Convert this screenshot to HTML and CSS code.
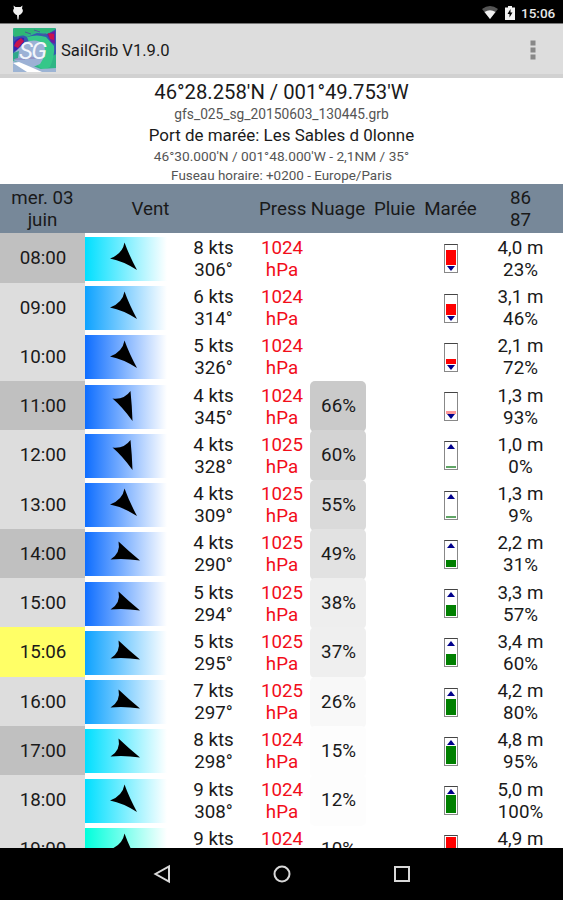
FILE: index.html
```
<!DOCTYPE html>
<html lang="fr">
<head>
    <meta charset="UTF-8">
    <meta name="viewport" content="width=device-width, initial-scale=1.0">
    <title>SailGrib V1.9.0</title>
    <link rel="stylesheet" href="styles.css">
</head>
<body>
    <!-- Shared shapes -->
    <svg class="sprites" width="0" height="0">
        <symbol id="wind-se" viewBox="0 0 80 44"><path d="M39.500 5.500Q37.500 17 25 21.500Q38 24 52 33Q44 18 39.500 5.500Z"/></symbol>
        <symbol id="wind-sse" viewBox="0 0 80 44"><path d="M45.500 6Q39 15 27.500 13.500Q37.500 22 47.500 36Q47 21 45.500 6Z"/></symbol>
        <symbol id="wind-ese" viewBox="0 0 80 44"><path d="M33.500 9.500Q36 21 25.500 27.500Q39 26 55 28.500Q44 19.500 33.500 9.500Z"/></symbol>
    </svg>

    <div class="screen">
        <div class="status-bar">
            <svg class="debug-icon" width="12" height="16" viewBox="0 0 12 16">
                <path d="M1.500 0.500L3.500 2H8.500L10.500 0.500L10 3.500Q12 6 9.500 8.500Q8 10 7 10L6.500 14.500H5.500L5 10Q4 10 2.500 8.500Q0 6 2 3.500Z"/>
            </svg>
            <svg class="wifi-icon" width="16" height="13" viewBox="0 0 16 13">
                <path class="wifi-back" d="M0 3Q8 -3 16 3L8 13Z"/>
                <path d="M2.500 6Q8 2.500 13.500 6L8 13Z"/>
            </svg>
            <svg class="battery-icon" width="10" height="14" viewBox="0 0 10 14">
                <path class="battery" d="M0 1.500H3V0H7V1.500H10V14H0Z"/>
                <path class="bolt" d="M5.500 3L2.500 8H4.500V11.500L7.500 6.500H5.500Z"/>
            </svg>
            <span class="clock">15:06</span>
        </div>

        <div class="action-bar">
            <svg class="logo" width="43" height="44" viewBox="0 0 43 44">
                <rect width="43" height="44" rx="1" fill="#2fb585"/>
                <path d="M0 8Q8 5 14 9L24 5L35 6L43 1V26L38 29Q34 12 20 12L0 28Z" fill="#3558b0"/>
                <path d="M2 1H40L34 4L24 3L12 7L1 9Z" fill="#2eb874"/>
                <path d="M12 4L18 6M21 2L27 4M28 7L33 6" stroke="#4a5a9a"/>
                <path d="M14 9Q24 6 33 9L41 18Q42 28 37 39L30 42L25 38Z" fill="#35c789"/>
                <path d="M1 14Q6 8 11 10Q12 16 7 21L1 23Z" fill="#3a1fb0"/>
                <path d="M34 6L42 3V16L38 14Z" fill="#6a1aa0"/>
                <path d="M3 14L8 10L11 13L5 20L1 18ZM35 5L41 6V12L37 11Z" fill="#c8134d"/>
                <path d="M12 14Q24 10 31 16Q34 27 27 36L18 40L0 32V26Z" fill="#9cb1d5"/>
                <path d="M0 25L6 23L5 30L0 32Z" fill="#2fa88a"/>
                <path d="M0 44V33Q10 34 28 41L43 40V44Z" fill="#9db4d4"/>
                <path d="M0 35L6 34Q18 39 29 44H14Z" fill="#fff"/>
                <path d="M2 31H12M15 30H26" fill="none" stroke="#8a7ab4"/>
                <text class="logo-text" x="6" y="31">SG</text>
            </svg>
            <span class="app-title">SailGrib V1.9.0</span>
            <svg class="overflow" width="6" height="20" viewBox="0 0 6 20">
                <rect x="0.500" y="0.500" width="5" height="5"/>
                <rect x="0.500" y="7.500" width="5" height="5"/>
                <rect x="0.500" y="14.500" width="5" height="5"/>
            </svg>
        </div>

        <div class="info">
            <div class="position">46°28.258'N / 001°49.753'W</div>
            <div class="grib-file">gfs_025_sg_20150603_130445.grb</div>
            <div class="port">Port de marée: Les Sables d 0lonne</div>
            <div class="port-position">46°30.000'N / 001°48.000'W - 2,1NM / 35°</div>
            <div class="timezone">Fuseau horaire: +0200 - Europe/Paris</div>
        </div>

        <div class="row header">
            <div>mer. 03<br>juin</div>
            <div class="wind-title">Vent</div>
            <div class="press-title">Press</div>
            <div>Nuage</div>
            <div>Pluie</div>
            <div>Marée</div>
            <div>86<br>87</div>
        </div>

        <div class="forecast">
            <div class="row">
                <div class="time dark">08:00</div>
                <div class="wind f8"><svg><use href="#wind-se"/></svg></div>
                <div class="speed">8 kts<br>306°</div>
                <div class="press">1024<br>hPa</div>
                <div></div>
                <div></div>
                <div class="tide"><div class="gauge falling"><i style="top: 5px; height: 15px"></i></div></div>
                <div>4,0 m<br>23%</div>
            </div>
            <div class="row">
                <div class="time">09:00</div>
                <div class="wind f6"><svg><use href="#wind-se"/></svg></div>
                <div class="speed">6 kts<br>314°</div>
                <div class="press">1024<br>hPa</div>
                <div></div>
                <div></div>
                <div class="tide"><div class="gauge falling"><i style="top: 9px; height: 11px"></i></div></div>
                <div>3,1 m<br>46%</div>
            </div>
            <div class="row">
                <div class="time">10:00</div>
                <div class="wind f4"><svg><use href="#wind-se"/></svg></div>
                <div class="speed">5 kts<br>326°</div>
                <div class="press">1024<br>hPa</div>
                <div></div>
                <div></div>
                <div class="tide"><div class="gauge falling"><i style="top: 15px; height: 5px"></i></div></div>
                <div>2,1 m<br>72%</div>
            </div>
            <div class="row">
                <div class="time dark">11:00</div>
                <div class="wind f4"><svg><use href="#wind-sse"/></svg></div>
                <div class="speed">4 kts<br>345°</div>
                <div class="press">1024<br>hPa</div>
                <div class="cloud" style="background: #cacaca">66%</div>
                <div></div>
                <div class="tide"><div class="gauge falling low"><i style="top: 18px; height: 3px"></i></div></div>
                <div>1,3 m<br>93%</div>
            </div>
            <div class="row">
                <div class="time">12:00</div>
                <div class="wind f4"><svg><use href="#wind-sse"/></svg></div>
                <div class="speed">4 kts<br>328°</div>
                <div class="press">1025<br>hPa</div>
                <div class="cloud" style="background: #d3d3d3">60%</div>
                <div></div>
                <div class="tide"><div class="gauge rising low"><i style="top: 24px; height: 2px"></i></div></div>
                <div>1,0 m<br>0%</div>
            </div>
            <div class="row">
                <div class="time">13:00</div>
                <div class="wind f4"><svg><use href="#wind-se"/></svg></div>
                <div class="speed">4 kts<br>309°</div>
                <div class="press">1025<br>hPa</div>
                <div class="cloud" style="background: #dadada">55%</div>
                <div></div>
                <div class="tide"><div class="gauge rising low"><i style="top: 24px; height: 2px"></i></div></div>
                <div>1,3 m<br>9%</div>
            </div>
            <div class="row">
                <div class="time dark">14:00</div>
                <div class="wind f4"><svg><use href="#wind-ese"/></svg></div>
                <div class="speed">4 kts<br>290°</div>
                <div class="press">1025<br>hPa</div>
                <div class="cloud" style="background: #e2e2e2">49%</div>
                <div></div>
                <div class="tide"><div class="gauge rising"><i style="top: 19px; height: 7px"></i></div></div>
                <div>2,2 m<br>31%</div>
            </div>
            <div class="row">
                <div class="time">15:00</div>
                <div class="wind f4"><svg><use href="#wind-ese"/></svg></div>
                <div class="speed">5 kts<br>294°</div>
                <div class="press">1025<br>hPa</div>
                <div class="cloud" style="background: #eeeeee">38%</div>
                <div></div>
                <div class="tide"><div class="gauge rising"><i style="top: 15px; height: 11px"></i></div></div>
                <div>3,3 m<br>57%</div>
            </div>
            <div class="row">
                <div class="time now">15:06</div>
                <div class="wind f6"><svg><use href="#wind-ese"/></svg></div>
                <div class="speed">5 kts<br>295°</div>
                <div class="press">1025<br>hPa</div>
                <div class="cloud" style="background: #efefef">37%</div>
                <div></div>
                <div class="tide"><div class="gauge rising"><i style="top: 15px; height: 11px"></i></div></div>
                <div>3,4 m<br>60%</div>
            </div>
            <div class="row">
                <div class="time">16:00</div>
                <div class="wind f6"><svg><use href="#wind-ese"/></svg></div>
                <div class="speed">7 kts<br>297°</div>
                <div class="press">1025<br>hPa</div>
                <div class="cloud" style="background: #f8f8f8">26%</div>
                <div></div>
                <div class="tide"><div class="gauge rising"><i style="top: 10px; height: 16px"></i></div></div>
                <div>4,2 m<br>80%</div>
            </div>
            <div class="row">
                <div class="time dark">17:00</div>
                <div class="wind f8"><svg><use href="#wind-ese"/></svg></div>
                <div class="speed">8 kts<br>298°</div>
                <div class="press">1024<br>hPa</div>
                <div class="cloud" style="background: #fdfdfd">15%</div>
                <div></div>
                <div class="tide"><div class="gauge rising"><i style="top: 8px; height: 18px"></i></div></div>
                <div>4,8 m<br>95%</div>
            </div>
            <div class="row">
                <div class="time">18:00</div>
                <div class="wind f8"><svg><use href="#wind-se"/></svg></div>
                <div class="speed">9 kts<br>308°</div>
                <div class="press">1024<br>hPa</div>
                <div class="cloud" style="background: #fdfdfd">12%</div>
                <div></div>
                <div class="tide"><div class="gauge rising"><i style="top: 8px; height: 18px"></i></div></div>
                <div>5,0 m<br>100%</div>
            </div>
            <div class="row">
                <div class="time">19:00</div>
                <div class="wind f9"><svg><use href="#wind-se"/></svg></div>
                <div class="speed">9 kts<br>&nbsp;</div>
                <div class="press">1024<br>&nbsp;</div>
                <div class="cloud">10%</div>
                <div></div>
                <div class="tide"><div class="gauge falling"><i style="top: 1px; height: 19px"></i></div></div>
                <div>4,9 m<br>&nbsp;</div>
            </div>
        </div>

        <div class="nav-bar">
            <svg width="20" height="20" viewBox="0 0 20 20"><path d="M17 2.500V17.500L3.500 10Z"/></svg>
            <svg width="20" height="20" viewBox="0 0 20 20"><circle cx="10" cy="10" r="7.500"/></svg>
            <svg width="20" height="20" viewBox="0 0 20 20"><rect x="3" y="3" width="14" height="14"/></svg>
        </div>
    </div>
</body>
</html>
```
FILE: styles.css
```
* {
    box-sizing: border-box;
    margin: 0;
    padding: 0;
}

body {
    font-family: Roboto, Arial, sans-serif;
    background: #000;
    color: #1a1a1a;
}

.sprites {
    display: block;
}

.screen {
    display: flex;
    flex-direction: column;
    width: 563px;
    height: 900px;
    overflow: hidden;
    background: #fff;
}

/* Status bar */
.status-bar {
    display: flex;
    flex: none;
    align-items: center;
    height: 23px;
    padding: 2px 7px 0 12px;
    background: #000;
    color: #e8e8e8;
    fill: #f2f2f2;
}

.wifi-icon {
    margin-left: auto;
}

.wifi-back {
    fill: #555;
}

.battery-icon {
    margin: 0 6px 0 7px;
}

.bolt {
    fill: #000;
}

.clock {
    width: 35px;
    font-size: 13.5px;
    font-weight: 500;
}

/* Action bar */
.action-bar {
    display: flex;
    flex: none;
    align-items: center;
    height: 55px;
    padding: 1px 27px 0 13px;
    background: #ddd;
    border-top: 1px solid #777;
    border-bottom: 4px solid #d1d1d1;
}

.logo-text {
    font: italic 400 24px Roboto, sans-serif;
    letter-spacing: -1.5px;
    fill: #f2f6fc;
}

.app-title {
    margin-left: 5px;
    padding-top: 1px;
    font-size: 16.6px;
}

.overflow {
    margin-left: auto;
    fill: #888;
}

/* Position and port */
.info {
    flex: none;
    height: 106px;
    text-align: center;
    white-space: nowrap;
}

.position {
    height: 27px;
    font-size: 20.25px;
    line-height: 28px;
}

.grib-file,
.port-position,
.timezone {
    font-size: 13.75px;
    color: #555;
}

.grib-file {
    height: 19px;
    line-height: 19px;
}

.port {
    height: 23px;
    font-size: 16.95px;
    line-height: 23px;
}

.port-position {
    height: 19px;
    font-size: 13.7px;
    line-height: 19px;
}

.timezone {
    height: 18px;
    font-size: 13.45px;
    line-height: 19px;
}

/* Forecast table */
.row {
    display: grid;
    grid-template-columns: 85px 97px 63px 65px 56px 57px 55px 85px;
    align-items: center;
    height: 49.25px;
    font-size: 18.75px;
    line-height: 22px;
    text-align: center;
    white-space: nowrap;
}

.header {
    flex: none;
    padding-top: 1px;
    background: #778899;
}

.wind-title {
    grid-column: 2 / 4;
    padding-right: 29px;
}

.press-title {
    padding-left: 14px;
    text-align: left;
}

.forecast {
    flex: 1;
    min-height: 0;
    overflow: hidden;
}

.time {
    height: 100%;
    padding-left: 1px;
    background: #ddd;
    line-height: 51px;
}

.time.dark {
    background: #c0c0c0;
}

.time.now {
    background: #ffff66;
}

.wind {
    width: 82px;
    height: 44px;
}

.wind svg {
    display: block;
    width: 80px;
    height: 44px;
}

.f4 { background: linear-gradient(to right, #0d6dff, #fff); }
.f6 { background: linear-gradient(to right, #0da2ff, #fff); }
.f8 { background: linear-gradient(to right, #00dfff, #fff); }
.f9 { background: linear-gradient(to right, #00ffdc, #fff); }

.press {
    padding-left: 9px;
    color: #f20d1a;
}

.cloud {
    height: 100%;
    padding-left: 1px;
    border-radius: 5px;
    line-height: 51px;
}

.tide {
    display: flex;
    justify-content: center;
}

/* Tide gauge: level bar plus a marker for the trend */
.gauge {
    position: relative;
    width: 14px;
    height: 29px;
    border: 1px solid #888;
    border-top-color: #444;
}

.gauge i {
    position: absolute;
    left: 1px;
    width: 10px;
}

.gauge::after {
    content: "";
    position: absolute;
    left: 2px;
    border: 4px solid transparent;
}

.falling i { background: #f00; }
.rising i { background: #008000; }
.falling.low i { background: #f99; }
.rising.low i { background: #5fa565; }

.falling::after {
    top: 21px;
    border-top: 5px solid #00008b;
    border-bottom: 0;
}

.rising::after {
    top: 2px;
    border-bottom: 5px solid #00008b;
    border-top: 0;
}

/* Navigation bar */
.nav-bar {
    display: flex;
    flex: none;
    justify-content: center;
    align-items: center;
    gap: 100px;
    height: 52px;
    background: #000;
}

.nav-bar svg {
    fill: none;
    stroke: #d8d8d8;
    stroke-width: 2;
}
```
